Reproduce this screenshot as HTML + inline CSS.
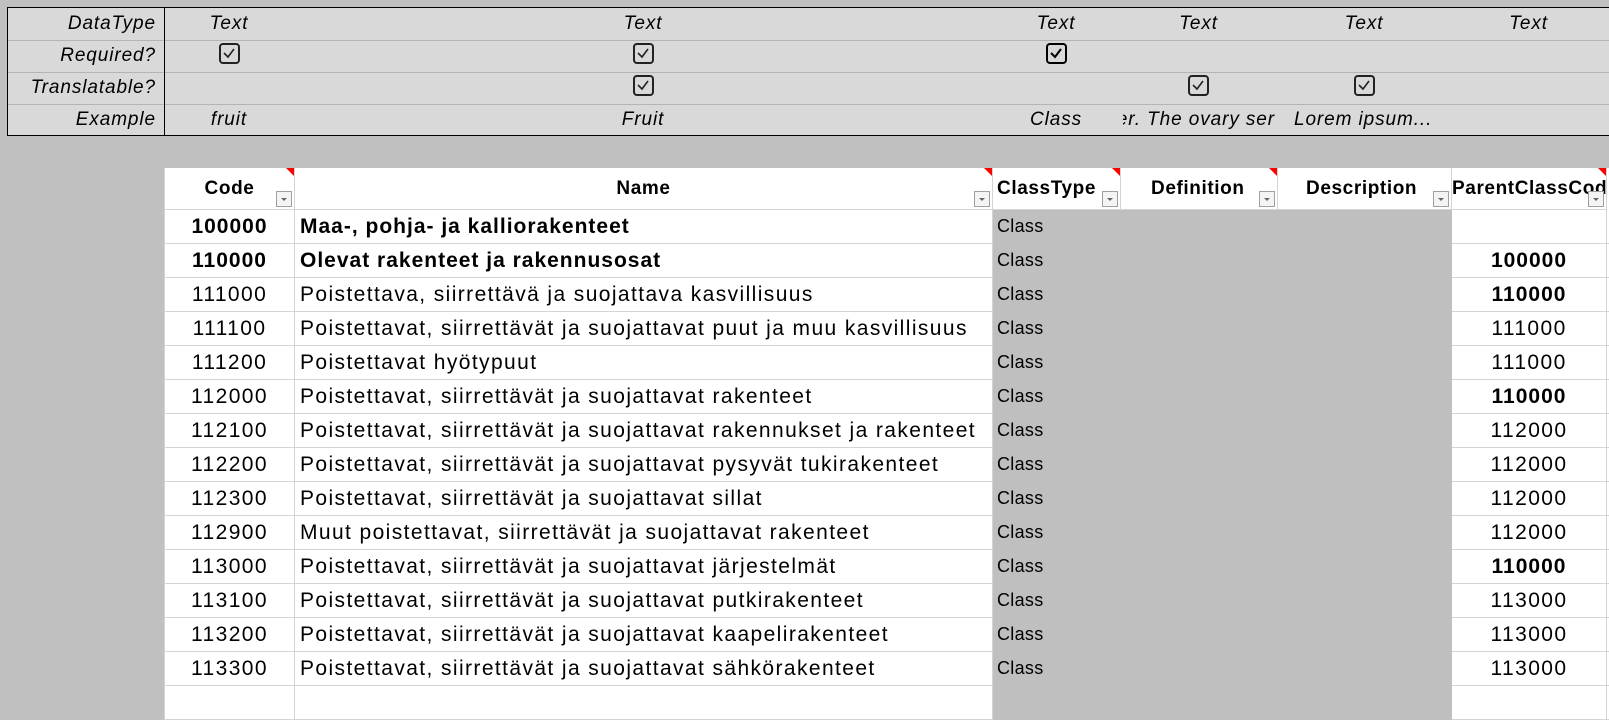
<!DOCTYPE html><html><head><meta charset="utf-8"><style>
body{margin:0;width:1609px;height:688px;background:#c0c0c0;overflow:hidden;position:relative;font-family:"Liberation Sans",sans-serif;}
.top{position:absolute;left:7px;top:7px;width:1610px;height:127px;background:#d9d9d9;border:1px solid #000;border-right:none;}
.tr{position:absolute;left:0;width:1610px;height:32px;border-bottom:1px solid #b4b4b4;}
.lab{position:absolute;left:0;width:148px;text-align:right;font-style:italic;font-size:19px;letter-spacing:0.9px;line-height:32px;}
.div{position:absolute;left:156px;top:0;width:1px;height:127px;background:#000;}
.tc{position:absolute;text-align:center;font-style:italic;font-size:19px;letter-spacing:0.9px;line-height:32px;white-space:nowrap;overflow:hidden;}
.cb{display:inline-block;width:17px;height:17px;border:2px solid #222;border-radius:4px;vertical-align:middle;position:relative;top:-2px;box-sizing:content-box;}
.cb svg{position:absolute;left:1px;top:1px}
table{position:absolute;left:164px;top:168px;width:1462px;border-collapse:collapse;table-layout:fixed;font-size:21px;letter-spacing:1.4px;}
td,th{height:33px;border:1px solid #d4d4d4;border-top:none;padding:0 5px;white-space:nowrap;overflow:hidden;background:#fff;}
th{height:41px;font-size:19px;letter-spacing:0.6px;position:relative;border-top:none;padding-bottom:0;}
td.c{text-align:center}
td.g{background:#bfbfbf;border-color:#bfbfbf;padding-left:4px;font-size:18px;letter-spacing:0.3px}
.f{position:absolute;right:2px;bottom:2px;width:14px;height:14px;border:1px solid #a0a0a0;background:#f4f4f4;}
.f:after{content:"";position:absolute;left:4px;top:6px;border-left:3px solid transparent;border-right:3px solid transparent;border-top:3px solid #666;}
.r:before{content:"";position:absolute;right:0;top:0;border-left:8px solid transparent;border-top:8px solid #f00;}
b{font-weight:bold;letter-spacing:1px}
</style></head><body>
<div class="top">
<div class="tr" style="top:0"></div><div class="tr" style="top:32px"></div><div class="tr" style="top:64px"></div>
<div class="lab" style="top:0">DataType</div><div class="lab" style="top:32px">Required?</div><div class="lab" style="top:64px">Translatable?</div><div class="lab" style="top:96px">Example</div>
<div class="div"></div>
</div>
<div style="position:absolute;left:0;top:8px;">
<div class="tc" style="left:164px;width:130px;top:0">Text</div>
<div class="tc" style="left:294px;width:698px;top:0">Text</div>
<div class="tc" style="left:992px;width:128px;top:0">Text</div>
<div class="tc" style="left:1120px;width:157px;top:0">Text</div>
<div class="tc" style="left:1277px;width:174px;top:0">Text</div>
<div class="tc" style="left:1451px;width:155px;top:0">Text</div>
<div class="tc" style="left:164px;width:130px;top:32px"><span class="cb"><svg width="14" height="14"><path d="M2 7 L6 11 L12 3" stroke="#222" stroke-width="1.6" fill="none"/></svg></span></div>
<div class="tc" style="left:294px;width:698px;top:32px"><span class="cb"><svg width="14" height="14"><path d="M2 7 L6 11 L12 3" stroke="#222" stroke-width="1.6" fill="none"/></svg></span></div>
<div class="tc" style="left:992px;width:128px;top:32px"><span class="cb" style="border-width:2.5px;border-color:#000"><svg width="14" height="14"><path d="M2 7 L6 11 L12 3" stroke="#000" stroke-width="2" fill="none"/></svg></span></div>
<div class="tc" style="left:294px;width:698px;top:64px"><span class="cb"><svg width="14" height="14"><path d="M2 7 L6 11 L12 3" stroke="#222" stroke-width="1.6" fill="none"/></svg></span></div>
<div class="tc" style="left:1120px;width:157px;top:64px"><span class="cb"><svg width="14" height="14"><path d="M2 7 L6 11 L12 3" stroke="#222" stroke-width="1.6" fill="none"/></svg></span></div>
<div class="tc" style="left:1277px;width:174px;top:64px"><span class="cb"><svg width="14" height="14"><path d="M2 7 L6 11 L12 3" stroke="#222" stroke-width="1.6" fill="none"/></svg></span></div>
<div class="tc" style="left:164px;width:130px;top:96px">fruit</div>
<div class="tc" style="left:294px;width:698px;top:96px">Fruit</div>
<div class="tc" style="left:992px;width:128px;top:96px">Class</div>
<div class="tc" style="left:1123px;width:152px;top:96px;height:32px"><span style="position:absolute;right:0;top:0">flower. The ovary ser</span></div>
<div class="tc" style="left:1294px;width:157px;top:96px;text-align:left">Lorem ipsum...</div>
</div>
<table>
<colgroup><col style="width:130px"><col style="width:698px"><col style="width:128px"><col style="width:157px"><col style="width:174px"><col style="width:155px"><col style="width:20px"></colgroup>
<tr><th class="r">Code<span class="f"></span></th><th class="r">Name<span class="f"></span></th><th class="r" style="text-align:left;padding-left:4px">ClassType<span class="f"></span></th><th class="r" style="text-align:left;padding-left:30px">Definition<span class="f"></span></th><th style="text-align:left;padding-left:28px">Description<span class="f"></span></th><th class="r" style="text-align:left;padding-left:0">ParentClassCode<span class="f"></span></th><th style="border:none;background:#fff"></th></tr>
<tr><td class="c"><b>100000</b></td><td><b>Maa-, pohja- ja kalliorakenteet</b></td><td class="g">Class</td><td class="g"></td><td class="g"></td><td class="c"></td><td></td></tr>
<tr><td class="c"><b>110000</b></td><td><b>Olevat rakenteet ja rakennusosat</b></td><td class="g">Class</td><td class="g"></td><td class="g"></td><td class="c"><b>100000</b></td><td></td></tr>
<tr><td class="c">111000</td><td>Poistettava, siirrettävä ja suojattava kasvillisuus</td><td class="g">Class</td><td class="g"></td><td class="g"></td><td class="c"><b>110000</b></td><td></td></tr>
<tr><td class="c">111100</td><td>Poistettavat, siirrettävät ja suojattavat puut ja muu kasvillisuus</td><td class="g">Class</td><td class="g"></td><td class="g"></td><td class="c">111000</td><td></td></tr>
<tr><td class="c">111200</td><td>Poistettavat hyötypuut</td><td class="g">Class</td><td class="g"></td><td class="g"></td><td class="c">111000</td><td></td></tr>
<tr><td class="c">112000</td><td>Poistettavat, siirrettävät ja suojattavat rakenteet</td><td class="g">Class</td><td class="g"></td><td class="g"></td><td class="c"><b>110000</b></td><td></td></tr>
<tr><td class="c">112100</td><td>Poistettavat, siirrettävät ja suojattavat rakennukset ja rakenteet</td><td class="g">Class</td><td class="g"></td><td class="g"></td><td class="c">112000</td><td></td></tr>
<tr><td class="c">112200</td><td>Poistettavat, siirrettävät ja suojattavat pysyvät tukirakenteet</td><td class="g">Class</td><td class="g"></td><td class="g"></td><td class="c">112000</td><td></td></tr>
<tr><td class="c">112300</td><td>Poistettavat, siirrettävät ja suojattavat sillat</td><td class="g">Class</td><td class="g"></td><td class="g"></td><td class="c">112000</td><td></td></tr>
<tr><td class="c">112900</td><td>Muut poistettavat, siirrettävät ja suojattavat rakenteet</td><td class="g">Class</td><td class="g"></td><td class="g"></td><td class="c">112000</td><td></td></tr>
<tr><td class="c">113000</td><td>Poistettavat, siirrettävät ja suojattavat järjestelmät</td><td class="g">Class</td><td class="g"></td><td class="g"></td><td class="c"><b>110000</b></td><td></td></tr>
<tr><td class="c">113100</td><td>Poistettavat, siirrettävät ja suojattavat putkirakenteet</td><td class="g">Class</td><td class="g"></td><td class="g"></td><td class="c">113000</td><td></td></tr>
<tr><td class="c">113200</td><td>Poistettavat, siirrettävät ja suojattavat kaapelirakenteet</td><td class="g">Class</td><td class="g"></td><td class="g"></td><td class="c">113000</td><td></td></tr>
<tr><td class="c">113300</td><td>Poistettavat, siirrettävät ja suojattavat sähkörakenteet</td><td class="g">Class</td><td class="g"></td><td class="g"></td><td class="c">113000</td><td></td></tr>
<tr><td class="c"></td><td></td><td class="g"></td><td class="g"></td><td class="g"></td><td class="c"></td><td></td></tr>
</table>
</body></html>
